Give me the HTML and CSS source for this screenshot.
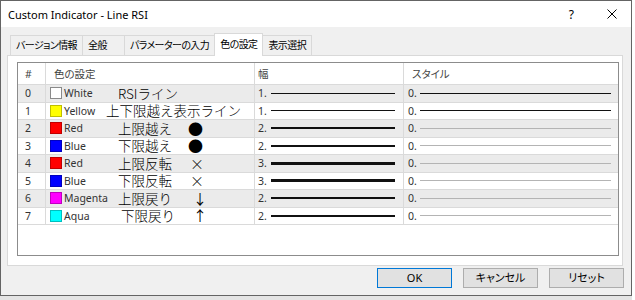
FILE: index.html
```html
<!DOCTYPE html>
<html>
    <head>
        <title>Custom Indicator - Line RSI</title>
        <link rel="stylesheet" href="styles.css">
    </head>
    <body>
        <div class="Window">
            <div class="TitleBar">
                <span class="Caption">Custom Indicator - Line RSI</span>
                <span class="Help">?</span>
                <svg class="Close" width="10" height="10" viewBox="0 0 10 10"><path d="M0.5 0.5L9.5 9.5M9.5 0.5L0.5 9.5" stroke="#000" stroke-width="1"/></svg>
            </div>

            <div class="Body">
                <div class="Tabs">
                    <div class="Tab">バージョン情報</div>
                    <div class="Tab">全般</div>
                    <div class="Tab">パラメーターの入力</div>
                    <div class="Tab Active">色の設定</div>
                    <div class="Tab">表示選択</div>
                </div>

                <div class="Panel">
                    <div class="List">
                        <div class="Row Head">
                            <div class="Cell Idx">#</div>
                            <div class="Cell ColorHead">色の設定</div>
                            <div class="Cell WidthHead">幅</div>
                            <div class="Cell StyleHead">スタイル</div>
                        </div>
                        <div class="Rows">
                            <div class="Row">
                                <div class="Cell Idx">0</div>
                                <div class="Cell Color"><span class="Swatch White"></span><span class="Name">White</span><span class="Note">RSIライン</span></div>
                                <div class="Cell Width"><span class="Num">1.</span><span class="Stroke W1"></span></div>
                                <div class="Cell Style"><span class="Num">0.</span><span class="Stroke W1"></span></div>
                            </div>
                            <div class="Row">
                                <div class="Cell Idx">1</div>
                                <div class="Cell Color"><span class="Swatch Yellow"></span><span class="Name">Yellow</span><span class="Note Wide">上下限越え表示ライン</span></div>
                                <div class="Cell Width"><span class="Num">1.</span><span class="Stroke W1"></span></div>
                                <div class="Cell Style"><span class="Num">0.</span><span class="Stroke W1"></span></div>
                            </div>
                            <div class="Row">
                                <div class="Cell Idx">2</div>
                                <div class="Cell Color"><span class="Swatch Red"></span><span class="Name">Red</span><span class="Note">上限越え</span><span class="Mark Dot">●</span></div>
                                <div class="Cell Width"><span class="Num">2.</span><span class="Stroke W2"></span></div>
                                <div class="Cell Style"><span class="Num">0.</span><span class="Stroke Off"></span></div>
                            </div>
                            <div class="Row">
                                <div class="Cell Idx">3</div>
                                <div class="Cell Color"><span class="Swatch Blue"></span><span class="Name">Blue</span><span class="Note">下限越え</span><span class="Mark Dot">●</span></div>
                                <div class="Cell Width"><span class="Num">2.</span><span class="Stroke W2"></span></div>
                                <div class="Cell Style"><span class="Num">0.</span><span class="Stroke Off"></span></div>
                            </div>
                            <div class="Row">
                                <div class="Cell Idx">4</div>
                                <div class="Cell Color"><span class="Swatch Red"></span><span class="Name">Red</span><span class="Note">上限反転</span><span class="Mark Cross">×</span></div>
                                <div class="Cell Width"><span class="Num">3.</span><span class="Stroke W3"></span></div>
                                <div class="Cell Style"><span class="Num">0.</span><span class="Stroke Off"></span></div>
                            </div>
                            <div class="Row">
                                <div class="Cell Idx">5</div>
                                <div class="Cell Color"><span class="Swatch Blue"></span><span class="Name">Blue</span><span class="Note">下限反転</span><span class="Mark Cross">×</span></div>
                                <div class="Cell Width"><span class="Num">3.</span><span class="Stroke W3"></span></div>
                                <div class="Cell Style"><span class="Num">0.</span><span class="Stroke Off"></span></div>
                            </div>
                            <div class="Row">
                                <div class="Cell Idx">6</div>
                                <div class="Cell Color"><span class="Swatch Magenta"></span><span class="Name">Magenta</span><span class="Note">上限戻り</span><span class="Mark Arrow">↓</span></div>
                                <div class="Cell Width"><span class="Num">2.</span><span class="Stroke W2"></span></div>
                                <div class="Cell Style"><span class="Num">0.</span><span class="Stroke Off"></span></div>
                            </div>
                            <div class="Row">
                                <div class="Cell Idx">7</div>
                                <div class="Cell Color"><span class="Swatch Aqua"></span><span class="Name">Aqua</span><span class="Note Late">下限戻り</span><span class="Mark Arrow">↑</span></div>
                                <div class="Cell Width"><span class="Num">2.</span><span class="Stroke W2"></span></div>
                                <div class="Cell Style"><span class="Num">0.</span><span class="Stroke Off"></span></div>
                            </div>
                        </div>
                    </div>
                </div>

                <div class="Buttons">
                    <div class="Button Default">OK</div>
                    <div class="Button">キャンセル</div>
                    <div class="Button">リセット</div>
                </div>
            </div>
        </div>
        <div class="Desk"></div>
    </body>
</html>
```

FILE: styles.css
```css
body {
    margin: 0;
    background-color: #fff;
    font-family: "Noto Sans", "Noto Sans CJK JP", sans-serif;
    color: #000;
}
.Window {
    width: 630px;
    height: 294px;
    border: 1px solid #646464;
    background-color: #f0f0f0;
    display: flex;
    flex-direction: column;
}
.TitleBar {
    height: 26px;
    background-color: #fff;
    display: flex;
    align-items: center;
    font-size: 11px;
}
.Caption {
    flex: 1;
    margin-left: 7px;
}
.Help {
    font-size: 12px;
    margin-right: 33px;
}
.Close {
    margin-right: 14px;
}
.Body {
    flex: 1;
    padding: 6px 8px 0 6px;
    display: flex;
    flex-direction: column;
}
/* tab strip */
.Tabs {
    height: 22px;
    margin-left: 3px;
    display: flex;
    align-items: flex-end;
}
.Tab {
    min-width: 31px;
    height: 19px;
    line-height: 19px;
    padding: 0 5px;
    margin-right: -1px;
    border: 1px solid #d9d9d9;
    border-bottom: none;
    font-size: 10px;
    letter-spacing: -0.6px;
    font-feature-settings: "palt";
}
.Tab.Active {
    height: 22px;
    line-height: 21px;
    margin-bottom: -1px;
    background-color: #fff;
    position: relative;
    z-index: 1;
}
.Panel {
    height: 211px;
    box-sizing: border-box;
    background-color: #fff;
    border: 1px solid #d9d9d9;
    padding: 6px 3px 9px 9px;
}
/* list view */
.List {
    height: 192px;
    border: 1px solid #8c8c8c;
    font-size: 10.5px;
    color: #333;
}
.Row {
    height: 16.5px;
    display: grid;
    grid-template-columns: 28px 209px 149px 1fr;
    border-bottom: 1px solid #dadada;
}
.Rows .Row:nth-child(odd) {
    background-color: #ebebeb;
}
.Row.Head {
    height: 21px;
    background-color: #fff;
    color: #444;
    font-feature-settings: "palt";
}
.Cell {
    display: flex;
    align-items: center;
    border-right: 1px solid #dadada;
    white-space: nowrap;
}
.Cell:last-child {
    border-right: none;
}
.Idx {
    padding-left: 7px;
}
.ColorHead {
    padding-left: 8px;
}
.WidthHead {
    padding-left: 3px;
}
.StyleHead {
    padding-left: 8px;
}
.Color {
    display: grid;
    grid-template-columns: 14px 42px 82px auto;
    align-items: center;
    padding-left: 4px;
}
.Swatch {
    width: 10px;
    height: 10px;
    border: 1px solid rgba(0, 0, 0, 0.25);
}
.White { background-color: #fff; border-color: #8a8a8a; }
.Yellow { background-color: #ffff00; }
.Red { background-color: #ff0000; }
.Blue { background-color: #0000ff; }
.Magenta { background-color: #ff00ff; }
.Aqua { background-color: #00ffff; }

/* hand-written notes over the list */
.Note {
    padding-left: 12px;
    font-family: "Noto Sans CJK JP", sans-serif;
    font-size: 13.5px;
    font-weight: 300;
    line-height: 15px;
    color: #000;
}
.Note.Wide {
    padding-left: 0;
    grid-column: span 2;
}
.Note.Late {
    padding-left: 15px;
}
.Mark {
    font-family: "Noto Sans CJK JP", sans-serif;
    line-height: 15px;
    color: #000;
}
.Dot {
    font-size: 15px;
}
.Cross {
    font-size: 14px;
    font-weight: 300;
    padding-left: 2px;
}
.Arrow {
    font-size: 14px;
    padding-left: 5px;
}
.Width {
    padding: 0 8px 0 3px;
}
.Style {
    padding: 0 7px 0 4px;
}
.Num {
    width: 13px;
}
.Style .Num {
    width: 12px;
}
.Stroke {
    flex: 1;
    background-color: #111;
}
.W1 { height: 1px; }
.W2 { height: 2px; }
.W3 { height: 3px; }
.Off {
    height: 1px;
    background-color: #b4b4b4;
}
/* dialog buttons */
.Buttons {
    margin-top: 2px;
    margin-right: -1px;
    display: flex;
    justify-content: flex-end;
    gap: 11px;
}
.Button {
    width: 73px;
    height: 18px;
    line-height: 18px;
    text-align: center;
    background-color: #e1e1e1;
    border: 1px solid #adadad;
    font-size: 11px;
    font-feature-settings: "palt";
}
.Button.Default {
    border-color: #0078d7;
}
.Desk {
    width: 632px;
    height: 4px;
    background-color: #e4e4e4;
}
```
